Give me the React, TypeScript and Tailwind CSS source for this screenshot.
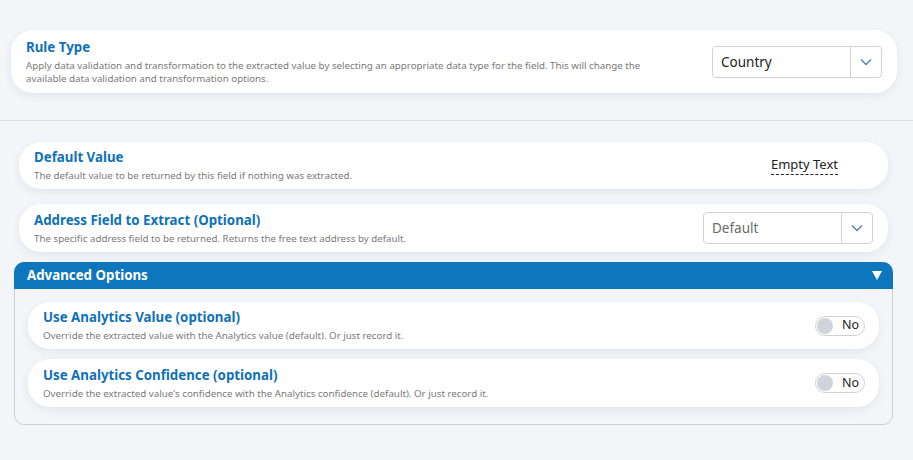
import React from 'react';

function Chevron() {
  return (
    <svg width="12" height="8" viewBox="0 0 12 8" fill="none">
      <path d="M1 1.5l5 5 5-5" stroke="#4a7fb0" strokeWidth="1.3" />
    </svg>
  );
}

function Select({ value, muted }: { value: string; muted?: boolean }) {
  return (
    <div className="flex h-[32px] w-[170px] rounded-[4px] border border-[#cfd3d8] bg-white">
      <div className={`flex flex-1 items-center px-[8px] text-[13.5px] ${muted ? 'text-[#6b6b6b]' : 'text-[#222]'}`}>
        {value}
      </div>
      <div className="flex w-[31px] items-center justify-center border-l border-[#cfd3d8]">
        <Chevron />
      </div>
    </div>
  );
}

function Toggle() {
  return (
    <div className="flex h-[20px] w-[50px] items-center rounded-full border border-[#cfd3d8] bg-white pl-[1px]">
      <div className="h-[16px] w-[16px] rounded-full bg-[#d1d5db]" />
      <span className="ml-[9px] text-[12.5px] text-[#222]">No</span>
    </div>
  );
}

function Card({
  title,
  desc,
  children,
  className,
}: {
  title: string;
  desc: React.ReactNode;
  children?: React.ReactNode;
  className?: string;
}) {
  return (
    <div
      className={`flex items-center justify-between rounded-[22px] bg-white shadow-[0_3px_10px_rgba(40,50,80,0.08)] ${className ?? ''}`}
    >
      <div>
        <div className="text-[13.3px] font-bold leading-[17px] text-[#0f71b8]">{title}</div>
        <div className="mt-[3px] text-[9.75px] leading-[13px] text-[#7a7a7a]">{desc}</div>
      </div>
      {children}
    </div>
  );
}

export default function App() {
  return (
    <div className="min-h-[460px] bg-[#f4f5f9] pt-[30px] font-['Noto_Sans',sans-serif]">
      <Card
        title="Rule Type"
        className="ml-[11px] mr-[16px] h-[63px] pl-[15px] pr-[15px]"
        desc={
          <>
            Apply data validation and transformation to the extracted value by selecting an appropriate data type for the field. This will change the
            <br />
            available data validation and transformation options.
          </>
        }
      >
        <div className="self-start pt-[16px]">
          <Select value="Country" />
        </div>
      </Card>

      <div className="mt-[27px] border-t border-[#dedfe3]" />

      <div className="ml-[19px] mr-[25px] mt-[21px] flex flex-col gap-[15px]">
        <Card
          title="Default Value"
          desc="The default value to be returned by this field if nothing was extracted."
          className="h-[47px] pl-[15px] pr-[50px]"
        >
          <span className="border-b border-dashed border-[#222] pb-[1px] text-[13px] leading-[17px] text-[#222]">
            Empty Text
          </span>
        </Card>
        <Card
          title="Address Field to Extract (Optional)"
          desc="The specific address field to be returned. Returns the free text address by default."
          className="h-[48px] pl-[15px] pr-[15px]"
        >
          <Select value="Default" muted />
        </Card>
      </div>

      <div className="ml-[14px] mr-[20px] mt-[10px] rounded-[10px] border border-[#cdd0d6] bg-[#f4f5f9]">
        <div className="flex h-[27px] items-center justify-between rounded-t-[10px] bg-[#0e76bc] pl-[13px] pr-[11px] -mx-px -mt-px">
          <span className="text-[13.3px] font-bold text-white">Advanced Options</span>
          <svg width="10" height="9" viewBox="0 0 10 9">
            <path d="M0 0h10L5 9z" fill="#fff" />
          </svg>
        </div>
        <div className="flex flex-col gap-[10px] px-[13px] pb-[17px] pt-[13px]">
          <Card
            title="Use Analytics Value (optional)"
            desc="Override the extracted value with the Analytics value (default). Or just record it."
            className="h-[47px] pl-[15px] pr-[14px]"
          >
            <Toggle />
          </Card>
          <Card
            title="Use Analytics Confidence (optional)"
            desc="Override the extracted value's confidence with the Analytics confidence (default). Or just record it."
            className="h-[48px] pl-[15px] pr-[14px]"
          >
            <Toggle />
          </Card>
        </div>
      </div>
    </div>
  );
}
